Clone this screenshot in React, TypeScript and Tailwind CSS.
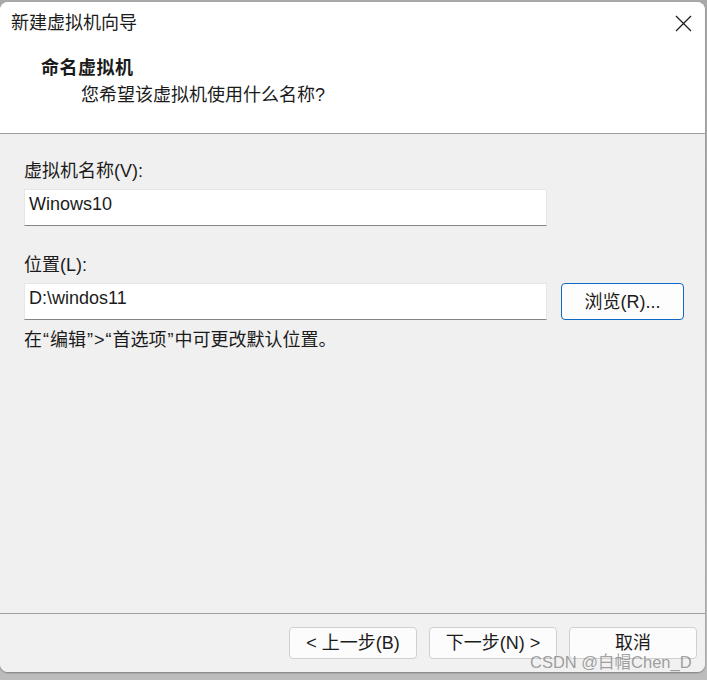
import React from "react";

const font = { fontFamily: '"Liberation Sans","Noto Sans CJK SC",sans-serif' };

export default function App() {
  return (
    <div
      className="relative w-[707px] h-[680px] overflow-hidden bg-[linear-gradient(to_bottom,#a9a9a9,#bdbdbd)] text-[18px] text-[#1b1b1b]"
      style={font}
    >
      <div className="mt-[2px] w-[705px] h-[670px] rounded-[8px] bg-[#f0f0f0] overflow-hidden flex flex-col shadow-[0_1px_2px_rgba(0,0,0,0.35)]">
        {/* Header */}
        <div className="bg-white border-b border-[#a0a0a0] h-[132px] flex flex-col">
          <div className="h-[42px] flex items-center justify-between pl-[11px] pr-[13px]">
            <span className="leading-[24px]">新建虚拟机向导</span>
            <svg width="17" height="17" viewBox="0 0 17 17" className="mt-[1px]">
              <path d="M1 1 L16 16 M16 1 L1 16" stroke="#1f1f1f" strokeWidth="1.3" fill="none" />
            </svg>
          </div>
          <div className="mt-[12px] pl-[41px] font-bold leading-[24px] tracking-[0.5px]">命名虚拟机</div>
          <div className="mt-[3px] pl-[81px] leading-[24px]">您希望该虚拟机使用什么名称?</div>
        </div>

        {/* Body */}
        <div className="flex-1 pl-[24px] pt-[25px]">
          <div className="leading-[24px]">虚拟机名称(V):</div>
          <div className="mt-[6px] w-[523px] h-[37px] bg-white border border-[#e6e6e6] border-b-[#858585] flex items-center px-[4px] pb-[7px]">
            Winows10
          </div>
          <div className="mt-[27px] leading-[24px]">位置(L):</div>
          <div className="mt-[6px] flex items-center gap-[14px]">
            <div className="shrink-0 w-[523px] h-[37px] bg-white border border-[#e6e6e6] border-b-[#858585] flex items-center px-[4px] pb-[6px]">
              D:\windos11
            </div>
            <button
              className="shrink-0 w-[123px] h-[37px] rounded-[4px] border border-[#1167c4] bg-[#fdfdfd] flex items-center justify-center leading-none"
              style={font}
            >
              浏览(R)...
            </button>
          </div>
          <div className="mt-[8px] leading-[24px]">
            在<span className="px-[1px]">“</span>编辑<span className="px-[1px]">”</span>&gt;<span className="px-[1px]">“</span>首选项<span className="px-[1px]">”</span>中可更改默认位置。
          </div>
        </div>

        {/* Footer */}
        <div className="h-[59px] border-t border-[#a0a0a0] bg-[#f1f1f1] flex items-start justify-end gap-[12px] pt-[13px] pr-[8px]">
          <button className="w-[128px] h-[32px] rounded-[4px] border border-[#d0d0d0] bg-[#fcfcfc] flex items-center justify-center leading-none" style={font}>
            &lt; 上一步(B)
          </button>
          <button className="w-[128px] h-[32px] rounded-[4px] border border-[#d0d0d0] bg-[#fcfcfc] flex items-center justify-center leading-none" style={font}>
            下一步(N) &gt;
          </button>
          <button className="w-[128px] h-[32px] rounded-[4px] border border-[#d0d0d0] bg-[#fcfcfc] flex items-center justify-center leading-none" style={font}>
            取消
          </button>
        </div>
      </div>

      {/* Watermark */}
      <div className="absolute left-[530px] top-[650px] leading-[24px] text-[16.5px] text-[rgba(110,110,110,0.65)] whitespace-nowrap">
        CSDN @白帽Chen_D
      </div>
    </div>
  );
}
